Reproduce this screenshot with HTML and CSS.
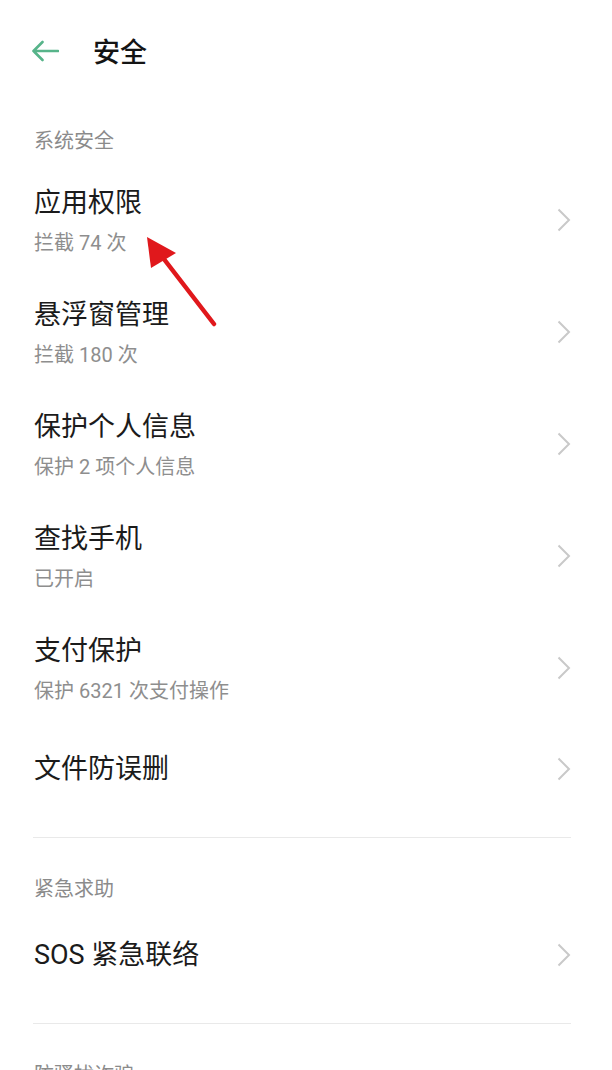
FILE: index.html
```html
<!DOCTYPE html>
<html lang="zh-CN">
<head>
<meta charset="utf-8">
<title>安全</title>
<link rel="stylesheet" href="styles.css">
</head>
<body>
<div class="page">
  <header class="topbar">
    <svg class="back" width="28" height="22" viewBox="0 0 28 22" aria-hidden="true">
      <path d="M27 11 H2.5 M11.5 2 L2.5 11 L11.5 20" fill="none" stroke="#57b48a" stroke-width="2.6" stroke-linecap="round" stroke-linejoin="round"/>
    </svg>
    <h1 class="title">安全</h1>
  </header>

  <section class="group first">
    <div class="group-title">系统安全</div>
    <div class="row two">
      <div class="texts"><div class="main">应用权限</div><div class="sub">拦截 74 次</div></div>
      <svg class="chev" width="14" height="24" viewBox="0 0 14 24"><path d="M1.5 1.5 L12 12 L1.5 22.5" fill="none" stroke="#c9c9c9" stroke-width="2"/></svg>
    </div>
    <div class="row two">
      <div class="texts"><div class="main">悬浮窗管理</div><div class="sub">拦截 180 次</div></div>
      <svg class="chev" width="14" height="24" viewBox="0 0 14 24"><path d="M1.5 1.5 L12 12 L1.5 22.5" fill="none" stroke="#c9c9c9" stroke-width="2"/></svg>
    </div>
    <div class="row two">
      <div class="texts"><div class="main">保护个人信息</div><div class="sub">保护 2 项个人信息</div></div>
      <svg class="chev" width="14" height="24" viewBox="0 0 14 24"><path d="M1.5 1.5 L12 12 L1.5 22.5" fill="none" stroke="#c9c9c9" stroke-width="2"/></svg>
    </div>
    <div class="row two">
      <div class="texts"><div class="main">查找手机</div><div class="sub">已开启</div></div>
      <svg class="chev" width="14" height="24" viewBox="0 0 14 24"><path d="M1.5 1.5 L12 12 L1.5 22.5" fill="none" stroke="#c9c9c9" stroke-width="2"/></svg>
    </div>
    <div class="row two">
      <div class="texts"><div class="main">支付保护</div><div class="sub">保护 6321 次支付操作</div></div>
      <svg class="chev" width="14" height="24" viewBox="0 0 14 24"><path d="M1.5 1.5 L12 12 L1.5 22.5" fill="none" stroke="#c9c9c9" stroke-width="2"/></svg>
    </div>
    <div class="row one">
      <div class="texts"><div class="main">文件防误删</div></div>
      <svg class="chev" width="14" height="24" viewBox="0 0 14 24"><path d="M1.5 1.5 L12 12 L1.5 22.5" fill="none" stroke="#c9c9c9" stroke-width="2"/></svg>
    </div>
  </section>

  <hr class="divider">

  <section class="group">
    <div class="group-title">紧急求助</div>
    <div class="row one">
      <div class="texts"><div class="main">SOS 紧急联络</div></div>
      <svg class="chev" width="14" height="24" viewBox="0 0 14 24"><path d="M1.5 1.5 L12 12 L1.5 22.5" fill="none" stroke="#c9c9c9" stroke-width="2"/></svg>
    </div>
  </section>

  <hr class="divider">

  <section class="group">
    <div class="group-title">防骚扰诈骗</div>
  </section>

  <svg class="annot" width="612" height="1070" viewBox="0 0 612 1070" aria-hidden="true">
    <line x1="214" y1="324" x2="160" y2="254" stroke="#e0181c" stroke-width="4.5" stroke-linecap="round"/>
    <polygon points="147,237 151,268 176,253" fill="#e0181c"/>
  </svg>
</div>
</body>
</html>
```

FILE: styles.css
```css
html, body {
  margin: 0;
  padding: 0;
  background: #ffffff;
}
body {
  width: 612px;
  height: 1070px;
  overflow: hidden;
  font-family: "Noto Sans CJK SC", "Noto Sans", Roboto, sans-serif;
  color: #1b1b1b;
}
.page {
  position: relative;
  padding: 0 41px 0 34px;
}
.topbar {
  height: 102px;
  display: flex;
  align-items: center;
  margin-left: -3px;
}
.back {
  display: block;
  margin-right: 34px;
}
.title {
  margin: 0;
  font-size: 27px;
  font-weight: 500;
  line-height: 36px;
  color: #141414;
}
.group-title {
  font-size: 20px;
  line-height: 24px;
  color: #8b8b8b;
  padding: 38px 0 13px;
}
.group.first .group-title {
  padding: 26px 0 15px;
}
.row {
  display: flex;
  align-items: center;
  justify-content: space-between;
}
.row.two {
  height: 112px;
}
.row.one {
  height: 84px;
}
.texts {
  display: flex;
  flex-direction: column;
  gap: 10px;
}
.row.two .texts {
  margin-top: -5px;
}
.row.two .chev {
  margin-top: -6px;
}
.main {
  font-family: Roboto, "Noto Sans CJK SC", sans-serif;
  font-size: 27px;
  line-height: 34px;
  color: #1b1b1b;
}
.sub {
  font-family: Roboto, "Noto Sans CJK SC", sans-serif;
  font-size: 20px;
  line-height: 26px;
  color: #8e8e8e;
}
.chev {
  display: block;
  flex: none;
}
.divider {
  border: 0;
  height: 1px;
  background: #e9e9e9;
  margin: 26px 0 0 -1px;
}
.annot {
  position: absolute;
  left: 0;
  top: 0;
  pointer-events: none;
}
```
